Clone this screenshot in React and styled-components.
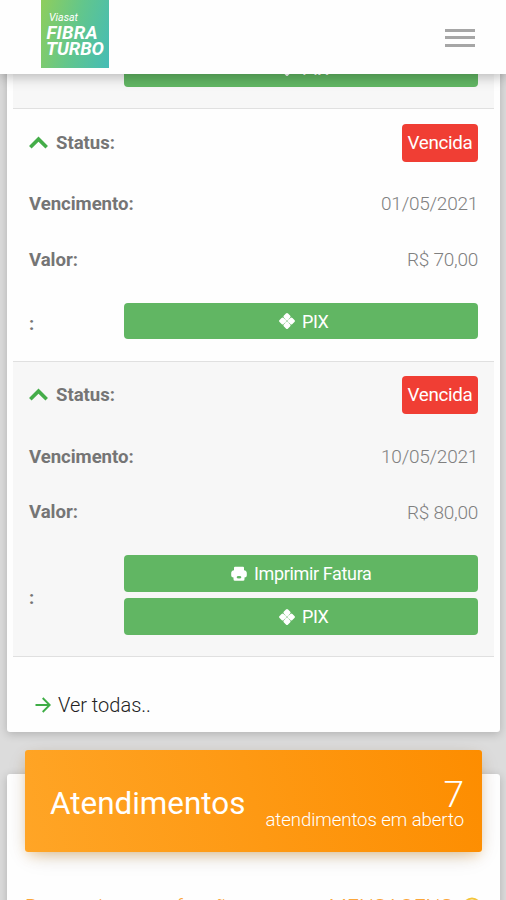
import React from 'react'
import styled, { createGlobalStyle } from 'styled-components'

const GlobalStyle = createGlobalStyle`
   * {
      box-sizing: border-box;
   }
   body {
      margin: 0;
      font-family: Roboto, 'Liberation Sans', sans-serif;
      font-weight: 300;
      background: #dcdcdc;
   }
`
const StyledPage = styled.div`
   height: 900px;
   overflow: hidden;
   background: #dcdcdc;
`
const StyledHeader = styled.header`
   position: relative;
   z-index: 2;
   display: flex;
   align-items: flex-start;
   justify-content: space-between;
   height: 74px;
   padding: 0 31px 0 41px;
   background: #fefefe;
   box-shadow: 0 3px 12px rgba(0, 0, 0, 0.26);
`
const StyledLogo = styled.div`
   width: 68px;
   height: 68px;
   background: linear-gradient(105deg, #8fce5c 0%, #62c68c 50%, #45bcb6 100%);
`
const StyledMenuButton = styled.button`
   display: flex;
   flex-direction: column;
   gap: 4.5px;
   margin-top: 28.5px;
   padding: 0;
   border: 0;
   background: none;
`
const StyledMenuLine = styled.span`
   width: 30px;
   height: 3px;
   background: #a6a6a6;
`
const StyledMain = styled.main`
   margin-top: -39.4px;
   padding: 0 6px 0 7px;
`
const StyledCard = styled.section`
   border-radius: 3px;
   background: #fefefe;
   box-shadow: 0 2px 10px rgba(0, 0, 0, 0.2);
`
const StyledInvoice = styled.article`
   margin: 0 6px;
   padding: 0 16px;
   border-bottom: 1.5px solid #e0e0e0;
   background: ${({ $striped }) => ($striped ? '#f7f7f7' : '#fefefe')};
`
const StyledRow = styled.div`
   display: flex;
   align-items: center;
   justify-content: space-between;
   height: ${({ $height }) => $height || '55.6px'};
   color: #808080;
   font-size: 19px;
   letter-spacing: -0.25px;
`
const StyledLabel = styled.span`
   display: flex;
   align-items: center;
   gap: 8px;
   color: #757575;
   font-size: 18.6px;
   font-weight: 700;
   letter-spacing: -0.05px;
`
const StyledBadge = styled.span`
   height: 38px;
   padding: 0 5.5px;
   border-radius: 4px;
   background: #f03e34;
   color: #fff;
   font-size: 18.8px;
   font-weight: 370;
   letter-spacing: -0.3px;
   line-height: 38px;
`
const StyledActions = styled.div`
   display: flex;
   flex-direction: column;
   gap: 6.5px;
   width: 354.5px;
   padding-bottom: 6px;
`
const StyledButton = styled.button`
   display: flex;
   align-items: center;
   justify-content: center;
   gap: 7px;
   height: 36.5px;
   padding: 0 0 0 ${({ $shift }) => $shift || '0'};
   border: 0;
   border-radius: 4px;
   background: #61b663;
   color: #fff;
   font-family: inherit;
   font-size: 18px;
   font-weight: 370;
   letter-spacing: -0.35px;
`
const StyledMore = styled.a`
   display: flex;
   align-items: center;
   gap: 7px;
   height: 75px;
   padding: 20px 0 0 28px;
   color: #222;
   font-size: 20px;
`
const StyledSupportCard = styled(StyledCard)`
   height: 200px;
   margin-top: 42px;
   padding: 0 18px;
`
const StyledBanner = styled.div`
   position: relative;
   top: -24px;
   display: flex;
   justify-content: space-between;
   height: 102px;
   padding: 0 18px 0 25px;
   border-radius: 3px;
   background: linear-gradient(75deg, #ffa526, #fd8d00);
   box-shadow: 0 6px 22px -6px rgba(0, 0, 0, 0.22), 0 5px 12px -3px rgba(255, 152, 0, 0.35);
   color: #fff;
`
const StyledBannerTitle = styled.h3`
   margin: 0;
   font-size: 31.4px;
   font-weight: 400;
   line-height: 108px;
`
const StyledCounter = styled.div`
   display: flex;
   flex-direction: column;
   align-items: flex-end;
   padding-top: 24px;
   font-size: 18.6px;
   letter-spacing: -0.08px;
   line-height: 20px;
`
const StyledCount = styled.span`
   height: 36px;
   font-size: 37px;
   line-height: 42px;
`
const StyledNotice = styled.p`
   display: flex;
   justify-content: space-between;
   margin: 18.2px 0 0;
   color: #fba63a;
   font-size: 20px;
   line-height: 24px;
`
const StyledNoticeLink = styled.span`
   display: flex;
   align-items: center;
   gap: 9px;
   font-size: 21px;
`

const Logo = () => (
   <StyledLogo>
      <svg width='68' height='68' fill='#fff' fontFamily='Roboto' fontStyle='italic'>
         <text x='8' y='21' fontSize='10.5' fontWeight='400' textLength='29' lengthAdjust='spacingAndGlyphs'>
            Viasat
         </text>
         <text x='5.5' y='38.5' fontSize='18.5' fontWeight='700' textLength='51'>
            FIBRA
         </text>
         <text x='5' y='55' fontSize='18.5' fontWeight='700' textLength='58'>
            TURBO
         </text>
      </svg>
   </StyledLogo>
)

const ChevronUp = () => (
   <svg width='19' height='14' viewBox='0 0 19 14' fill='none' stroke='#44ad49' strokeWidth='3.6'>
      <path d='M1.3 11.2 9.5 3.1 17.7 11.2' />
   </svg>
)

const PixIcon = () => (
   <svg width='16' height='16' viewBox='0 0 16 16'>
      <g transform='rotate(45 8 8)' fill='#fff'>
         <rect x='2' y='2' width='5.8' height='5.8' rx='1.5' />
         <rect x='8.2' y='2' width='5.8' height='5.8' rx='1.5' />
         <rect x='2' y='8.2' width='5.8' height='5.8' rx='1.5' />
         <rect x='8.2' y='8.2' width='5.8' height='5.8' rx='1.5' />
         <rect x='5' y='5' width='6' height='6' opacity='0.5' />
      </g>
   </svg>
)

const PrintIcon = () => (
   <svg width='16' height='16' viewBox='0 0 16 16' fill='#fff'>
      <path d='M4 .8h8q1 0 1 1v2.4q2.8.3 2.8 3v2.3q0 1.8-2.3 2v1.8q0 1.5-1.5 1.5H4q-1.5 0-1.5-1.5v-1.8q-2.3-.2-2.3-2V7.2q0-2.7 2.8-3V1.8q0-1 1-1z' />
      <ellipse cx='8' cy='11.3' rx='2.4' ry='1.3' fill='#61b663' />
   </svg>
)

const ArrowIcon = () => (
   <svg width='16' height='16' viewBox='0 0 16 16' fill='none' stroke='#3fad46' strokeWidth='1.9'>
      <path d='M.5 8h14M7.7 1 14.7 8l-7 7' />
   </svg>
)

const SmileIcon = () => (
   <svg width='20' height='20' viewBox='0 0 20 20' fill='none' stroke='#f3c53c' strokeWidth='2'>
      <circle cx='10' cy='10' r='8.5' />
      <path d='M6 12q4 4 8 0M7 7v1.5M13 7v1.5' />
   </svg>
)

const invoices = [
   { due: '10/04/2021', value: 'R$ 80,00', striped: true },
   { due: '01/05/2021', value: 'R$ 70,00' },
   { due: '10/05/2021', value: 'R$ 80,00', striped: true, printable: true },
]

const Invoice = ({ due, value, striped, printable, collapsed }) => (
   <StyledInvoice $striped={striped}>
      {!collapsed && (
         <>
            <StyledRow $height='67px'>
               <StyledLabel>
                  <ChevronUp />
                  Status:
               </StyledLabel>
               <StyledBadge>Vencida</StyledBadge>
            </StyledRow>
            <StyledRow>
               <StyledLabel>Vencimento:</StyledLabel>
               {due}
            </StyledRow>
            <StyledRow>
               <StyledLabel>Valor:</StyledLabel>
               {value}
            </StyledRow>
         </>
      )}
      <StyledRow $height={printable ? '116.5px' : '73.5px'}>
         <StyledLabel>{collapsed ? '' : ':'}</StyledLabel>
         <StyledActions>
            {printable && (
               <StyledButton $shift='1px'>
                  <PrintIcon />
                  Imprimir Fatura
               </StyledButton>
            )}
            <StyledButton $shift='6px'>
               <PixIcon />
               PIX
            </StyledButton>
         </StyledActions>
      </StyledRow>
   </StyledInvoice>
)

const App = () => {
   return (
      <>
         <GlobalStyle />
         <StyledPage>
            <StyledHeader>
               <Logo />
               <StyledMenuButton aria-label='Menu'>
                  <StyledMenuLine />
                  <StyledMenuLine />
                  <StyledMenuLine />
               </StyledMenuButton>
            </StyledHeader>
            <StyledMain>
               <StyledCard>
                  {invoices.map((invoice, index) => (
                     <Invoice key={invoice.due} {...invoice} collapsed={index === 0} />
                  ))}
                  <StyledMore>
                     <ArrowIcon />
                     Ver todas..
                  </StyledMore>
               </StyledCard>
               <StyledSupportCard>
                  <StyledBanner>
                     <StyledBannerTitle>Atendimentos</StyledBannerTitle>
                     <StyledCounter>
                        <StyledCount>7</StyledCount>
                        atendimentos em aberto
                     </StyledCounter>
                  </StyledBanner>
                  <StyledNotice>
                     <span>Responda nossa função</span>
                     <StyledNoticeLink>
                        MENSAGENS
                        <SmileIcon />
                     </StyledNoticeLink>
                  </StyledNotice>
               </StyledSupportCard>
            </StyledMain>
         </StyledPage>
      </>
   )
}

export default App
